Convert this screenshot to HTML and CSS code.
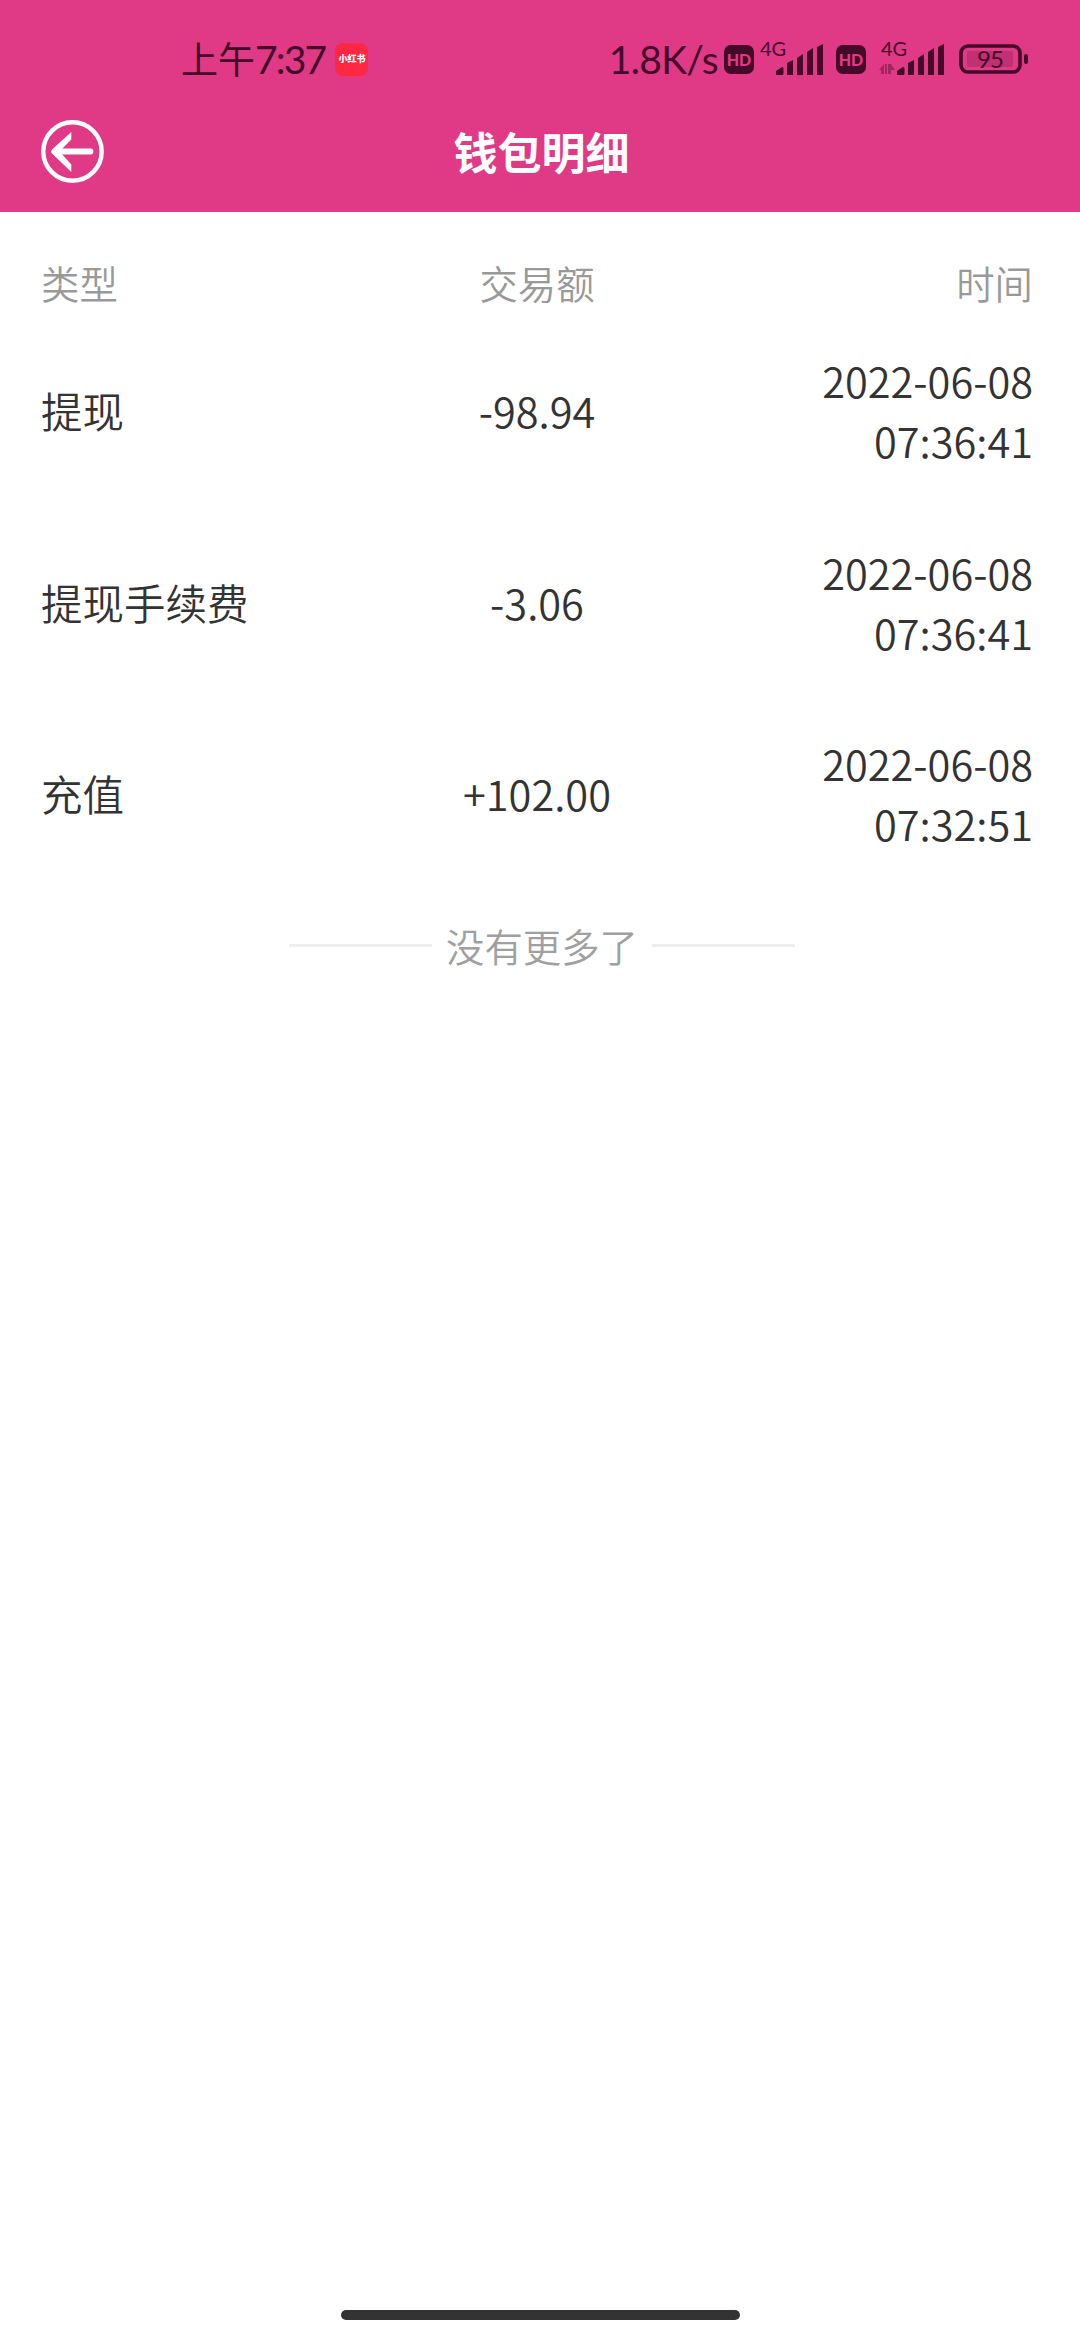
FILE: index.html
```
<!DOCTYPE html>
<html lang="zh-CN">
<head>
  <meta charset="UTF-8">
  <meta name="viewport" content="width=device-width, initial-scale=1.0">
  <title>钱包明细</title>
  <link rel="stylesheet" href="styles.css">
</head>
<body>

  <header class="top">
    <!-- Phone status bar -->
    <div class="status-bar">
      <div class="status-left">
        <span class="clock-period">上午</span>
        <span class="clock-time">7:37</span>
        <span class="app-badge"><span class="app-badge-text">小红书</span></span>
      </div>
      <div class="status-right">
        <span class="net-speed">1.8K/s</span>
        <span class="hd">HD</span>
        <svg class="signal signal-one" width="66" height="40" viewBox="0 -4 66 40">
          <text class="signal-text" x="2" y="17">4G</text>
          <path d="M18 36v-4l6-4q1.500 0 1.500 1.500v5q0 1.500-1.500 1.500zM29 24l6-3v15h-6zM39 19l6-4v21h-6zM49 13l6-4v27h-6zM59 8l6-3v31h-6z"/>
        </svg>
        <span class="hd">HD</span>
        <svg class="signal signal-two" width="66" height="40" viewBox="0 -4 66 40">
          <text class="signal-text" x="2" y="17">4G</text>
          <path class="data-arrows" d="M0 31l5-6v10h-3v-4zM6 25h2v10h-2zM9 25h3l4 6h-4v4h-3z"/>
          <path d="M18 36v-4l6-4q1.500 0 1.500 1.500v5q0 1.500-1.500 1.500zM29 24l6-3v15h-6zM39 19l6-4v21h-6zM49 13l6-4v27h-6zM59 8l6-3v31h-6z"/>
        </svg>
        <svg class="battery" width="70" height="30" viewBox="0 0 70 30">
          <rect x="2" y="2" width="59" height="26" rx="7" fill="none" stroke="#430a29" stroke-width="3.600"/>
          <rect x="8" y="7" width="46" height="16" rx="2" opacity="0.200"/>
          <rect x="65" y="10" width="4" height="10" rx="2"/>
          <text class="battery-text" x="18" y="24" textLength="27">95</text>
        </svg>
      </div>
    </div>

    <!-- Title bar -->
    <div class="nav-bar">
      <button class="back" aria-label="返回">
        <svg width="64" height="64" viewBox="0 0 64 64" fill="none">
          <circle cx="32.500" cy="32.500" r="29.200" stroke="#fff" stroke-width="4.400"/>
          <path d="M19 32.500H50.500" stroke="#fff" stroke-width="5.800" stroke-linecap="round"/>
          <path d="M31.300 13L12 30.500Q10.500 32.500 12 34.500L31.300 53V45.500L19.500 32.500L31.300 20.500Z" fill="#fff"/>
        </svg>
      </button>
      <h1 class="title">钱包明细</h1>
    </div>
  </header>

  <main class="list">
    <div class="row row-head">
      <div class="col-type">类型</div>
      <div class="col-amount">交易额</div>
      <div class="col-time">时间</div>
    </div>
    <div class="row">
      <div class="col-type">提现</div>
      <div class="col-amount">-98.94</div>
      <div class="col-time">2022-06-08<br>07:36:41</div>
    </div>
    <div class="row">
      <div class="col-type">提现手续费</div>
      <div class="col-amount">-3.06</div>
      <div class="col-time">2022-06-08<br>07:36:41</div>
    </div>
    <div class="row">
      <div class="col-type">充值</div>
      <div class="col-amount">+102.00</div>
      <div class="col-time">2022-06-08<br>07:32:51</div>
    </div>
    <div class="no-more">没有更多了</div>
  </main>

  <div class="home-bar"></div>

</body>
</html>
```
FILE: styles.css
```
* {
  box-sizing: border-box;
}

body {
  margin: 0;
  height: 2340px;
  display: flex;
  flex-direction: column;
  background-color: #fff;
  color: #333;
  font-family: "Noto Sans CJK SC", sans-serif;
  font-weight: 350;
}

/* Pink header */
.top {
  height: 212px;
  background-color: #e03a86;
}

.status-bar {
  height: 118px;
  padding: 0 51px 0 181px;
  display: flex;
  justify-content: space-between;
  align-items: center;
  color: #430a29;
  fill: #430a29;
  font-weight: 400;
}

.status-left,
.status-right {
  display: flex;
  align-items: center;
}

.clock-period {
  margin-top: -3px;
  font-size: 37px;
  line-height: 60px;
}

.clock-time,
.net-speed {
  margin-top: -1px;
  font-family: Lato, sans-serif;
  font-size: 39px;
  line-height: 60px;
}

.clock-time {
  letter-spacing: -1.8px;
}

.app-badge {
  width: 33px;
  height: 33px;
  margin-left: 10px;
  display: flex;
  align-items: center;
  justify-content: center;
  border-radius: 8px;
  background-color: #ff2741;
  color: #fff;
}

.app-badge-text {
  font-size: 9px;
  font-weight: 900;
  line-height: 12px;
  white-space: nowrap;
}

.hd {
  width: 30px;
  height: 29px;
  border-radius: 7px;
  background-color: #430a29;
  color: #e03a86;
  font-family: Lato, sans-serif;
  font-size: 16px;
  font-weight: 900;
  line-height: 29px;
  text-align: center;
}

.net-speed {
  margin-right: 6px;
  letter-spacing: -0.7px;
}

.signal {
  margin-top: -8px;
  overflow: visible;
}

.signal-one {
  margin-left: 4px;
  margin-right: 12px;
}

.signal-two {
  margin-left: 13px;
  margin-right: 14px;
}

.signal-text {
  font-family: Lato, sans-serif;
  font-size: 20px;
}

.data-arrows {
  opacity: 0.4;
}

.battery-text {
  font-family: Lato, sans-serif;
  font-size: 24px;
}

.nav-bar {
  height: 94px;
  padding: 1px 39px 0 40px;
  display: grid;
  grid-template-columns: 64px 1fr 62px;
  align-items: start;
}

.back {
  width: 64px;
  height: 64px;
  padding: 0;
  border: none;
  background: none;
}

.title {
  margin: 0;
  color: #fff;
  font-size: 44px;
  font-weight: 700;
  line-height: 64px;
  text-align: center;
}

/* Transaction list */
.list {
  flex: 1;
  padding: 0 47px 0 41px;
}

.row {
  height: 191.8px;
  display: grid;
  grid-template-columns: 1fr 1fr 1fr;
  align-items: center;
  font-size: 41.5px;
  line-height: 60px;
}

.row-head {
  height: 102px;
  padding-top: 37px;
  color: #999;
  font-size: 38.4px;
}

.col-amount {
  text-align: center;
}

.col-time {
  text-align: right;
}

.no-more {
  display: flex;
  align-items: center;
  justify-content: center;
  gap: 14px;
  margin-top: 26px;
  padding-left: 10px;
  color: #a0a0a0;
  font-size: 38.4px;
  line-height: 60px;
}

.no-more::before,
.no-more::after {
  content: "";
  width: 143px;
  height: 3px;
  background-color: #eee;
}

.home-bar {
  width: 399px;
  height: 10px;
  margin: 0 auto 20px;
  border-radius: 5px;
  background-color: #333;
}
```
